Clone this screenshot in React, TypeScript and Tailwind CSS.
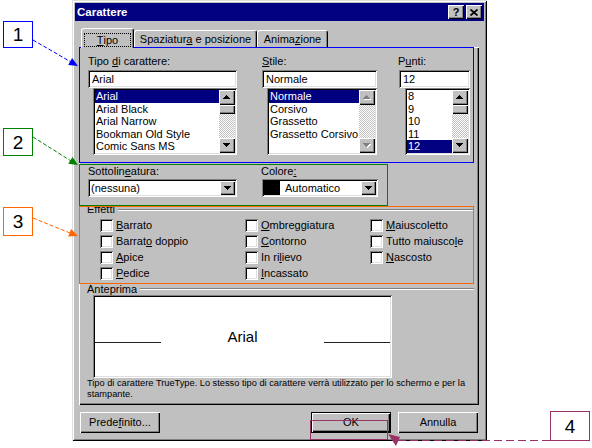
import React from "react";

const RAISED = "shadow-[inset_1px_1px_#ffffff,inset_-1px_-1px_#000000,inset_-2px_-2px_#808080]";
const SUNKEN = "shadow-[inset_1px_1px_#808080,inset_-1px_-1px_#ffffff,inset_2px_2px_#000000,inset_-2px_-2px_#dfdfdf]";
const DIALOG = "shadow-[inset_1px_1px_#dfdfdf,inset_-1px_-1px_#000000,inset_2px_2px_#ffffff,inset_-2px_-2px_#808080]";

function Tri({ dir, disabled }: { dir: "up" | "down"; disabled?: boolean }) {
  const pts = dir === "up" ? "3.5,0 7,4 0,4" : "0,0 7,0 3.5,4";
  return (
    <svg width="8" height="5" viewBox="0 0 8 5" shapeRendering="crispEdges">
      {disabled && <polygon points={pts} transform="translate(1,1)" fill="#ffffff" />}
      <polygon points={pts} fill={disabled ? "#808080" : "#000000"} />
    </svg>
  );
}

function SBtn({ dir, disabled }: { dir: "up" | "down"; disabled?: boolean }) {
  return (
    <div className={`flex h-[15px] w-[16px] items-center justify-center bg-[#c0c0c0] ${RAISED}`}>
      <Tri dir={dir} disabled={disabled} />
    </div>
  );
}

function ScrollBar({ disabled }: { disabled?: boolean }) {
  return (
    <div className="flex w-[16px] flex-col bg-[repeating-conic-gradient(#c0c0c0_0_25%,#ffffff_0_50%)] bg-[length:2px_2px]">
      <SBtn dir="up" disabled={disabled} />
      {!disabled && <div className={`h-[9px] bg-[#c0c0c0] ${RAISED}`} />}
      <div className="flex-1" />
      <SBtn dir="down" disabled={disabled} />
    </div>
  );
}

function TextBox({ children }: { children: React.ReactNode }) {
  return (
    <div className={`mt-[2px] flex h-[18px] items-center bg-white pl-[4px] ${SUNKEN}`}>{children}</div>
  );
}

function ListBox({
  items,
  selected,
  className,
  disabledScroll,
}: {
  items: string[];
  selected: number;
  className: string;
  disabledScroll?: boolean;
}) {
  return (
    <div className={`flex h-[67px] bg-white p-[2px] ${SUNKEN} ${className}`}>
      <div className="flex flex-1 flex-col overflow-hidden">
        {items.map((it, i) => (
          <div
            key={it}
            className={
              i === selected
                ? "h-[12.5px] whitespace-nowrap bg-[#000080] pl-[1px] leading-[12.5px] text-white"
                : "h-[12.5px] whitespace-nowrap pl-[1px] leading-[12.5px]"
            }
          >
            {it}
          </div>
        ))}
      </div>
      <ScrollBar disabled={disabledScroll} />
    </div>
  );
}

function Combo({ children }: { children: React.ReactNode }) {
  return (
    <div className={`mt-[1px] flex h-[18px] bg-white p-[2px] ${SUNKEN}`}>
      <div className="flex flex-1 items-center pl-[1px]">{children}</div>
      <div className={`flex h-[14px] w-[15px] items-center justify-center bg-[#c0c0c0] ${RAISED}`}>
        <Tri dir="down" />
      </div>
    </div>
  );
}

function Check({ children }: { children: React.ReactNode }) {
  return (
    <div className="flex h-[13px] items-center">
      <div className={`h-[13px] w-[13px] bg-white ${SUNKEN}`} />
      <span className="ml-[3px] whitespace-nowrap leading-[13px]">{children}</span>
    </div>
  );
}

function Button({ children, className }: { children: React.ReactNode; className: string }) {
  return (
    <div className={`flex items-center justify-center bg-[#c0c0c0] ${RAISED} ${className}`}>{children}</div>
  );
}

export default function App() {
  return (
    <div className="relative h-[448px] w-[592px] overflow-hidden bg-white font-['Liberation_Sans',Arial,sans-serif] text-[11px] leading-[13px] text-black">
      {/* Dialog */}
      <div className={`ml-[72px] flex h-[441px] w-[415px] flex-col bg-[#c0c0c0] ${DIALOG}`}>
        {/* Title bar */}
        <div className="mx-[3px] mt-[3px] flex h-[18px] items-center bg-[#000080] pl-[2px] pr-[2px]">
          <span className="flex-1 text-[11.5px] font-bold text-white">Carattere</span>
          <div className={`flex h-[14px] w-[16px] items-center justify-center bg-[#c0c0c0] text-[11px] font-bold leading-none ${RAISED}`}>
            ?
          </div>
          <div className={`ml-[2px] flex h-[14px] w-[16px] items-center justify-center bg-[#c0c0c0] ${RAISED}`}>
            <svg width="8" height="7" viewBox="0 0 8 7">
              <path d="M0.5 0.5 L7.5 6.5 M7.5 0.5 L0.5 6.5" stroke="#000000" strokeWidth="1.7" />
            </svg>
          </div>
        </div>

        {/* Tabs */}
        <div className="relative z-10 -mb-px ml-[9px] mt-[7px] flex h-[20px] items-end">
          <div className="flex h-[20px] w-[53px] justify-center rounded-t-[3px] border-l border-r border-t border-l-white border-r-black border-t-white bg-[#c0c0c0] pt-[4px] shadow-[inset_-1px_0_#808080]">
            <span className="flex h-[14px] w-[47px] justify-center border border-dotted border-black leading-[12px]">
              <u>T</u>ipo
            </span>
          </div>
          <div className="mb-px flex h-[17px] w-[123px] justify-center rounded-t-[3px] border-l border-r border-t border-l-white border-r-black border-t-white pt-[2px] shadow-[inset_-1px_0_#808080]">
            <span>
              Spaziatur<u>a</u> e posizione
            </span>
          </div>
          <div className="mb-px flex h-[17px] w-[71px] justify-center rounded-t-[3px] border-l border-r border-t border-l-white border-r-black border-t-white pt-[2px] shadow-[inset_-1px_0_#808080]">
            <span>
              Anima<u>z</u>ione
            </span>
          </div>
        </div>

        {/* Panel */}
        <div className={`ml-[7px] flex h-[358px] w-[400px] flex-col bg-[#c0c0c0] pt-[8px] ${RAISED}`}>
          {/* Font / Style / Size */}
          <div className="ml-[9px] flex">
            <div className="flex w-[149px] flex-col">
              <div className="h-[13px]">
                Tipo <u>d</u>i carattere:
              </div>
              <TextBox>Arial</TextBox>
              <ListBox
                className="ml-[5px] w-[144px]"
                items={["Arial", "Arial Black", "Arial Narrow", "Bookman Old Style", "Comic Sans MS"]}
                selected={0}
              />
            </div>
            <div className="ml-[25px] flex w-[115px] flex-col">
              <div className="h-[13px]">
                <u>S</u>tile:
              </div>
              <TextBox>Normale</TextBox>
              <ListBox
                className="ml-[5px] w-[110px]"
                items={["Normale", "Corsivo", "Grassetto", "Grassetto Corsivo"]}
                selected={0}
                disabledScroll
              />
            </div>
            <div className="ml-[22px] flex w-[71px] flex-col">
              <div className="-ml-px h-[13px]">
                P<u>u</u>nti:
              </div>
              <TextBox>12</TextBox>
              <ListBox className="ml-[6px] w-[65px]" items={["8", "9", "10", "11", "12"]} selected={4} />
            </div>
          </div>

          {/* Underline / Color */}
          <div className="ml-[9px] mt-[10px] flex">
            <div className="flex w-[149px] flex-col">
              <div className="h-[13px]">
                Sottolin<u>e</u>atura:
              </div>
              <Combo>(nessuna)</Combo>
            </div>
            <div className="ml-[25px] flex w-[116px] flex-col">
              <div className="-ml-px h-[13px]">
                Colore<u>:</u>
              </div>
              <Combo>
                <div className="-ml-px h-[14px] w-[16px] bg-black" />
                <span className="ml-[5px]">Automatico</span>
              </Combo>
            </div>
          </div>

          {/* Effetti */}
          <div className="ml-[8px] mr-[5px] mt-[6px] flex h-[13px] items-center">
            <span className="pr-[3px]">Effetti</span>
            <div className="h-[2px] flex-1 border-b border-t border-b-white border-t-[#808080]" />
          </div>
          <div className="ml-[21px] mt-[3px] flex">
            <div className="flex w-[145px] flex-col gap-[3px]">
              <Check>
                <u>B</u>arrato
              </Check>
              <Check>
                Barrat<u>o</u> doppio
              </Check>
              <Check>
                <u>A</u>pice
              </Check>
              <Check>
                <u>P</u>edice
              </Check>
            </div>
            <div className="flex w-[125px] flex-col gap-[3px]">
              <Check>
                <u>O</u>mbreggiatura
              </Check>
              <Check>
                <u>C</u>ontorno
              </Check>
              <Check>
                In ri<u>l</u>ievo
              </Check>
              <Check>
                <u>I</u>ncassato
              </Check>
            </div>
            <div className="flex flex-col gap-[3px]">
              <Check>
                <u>M</u>aiuscoletto
              </Check>
              <Check>
                Tutto maiusco<u>l</u>e
              </Check>
              <Check>
                <u>N</u>ascosto
              </Check>
            </div>
          </div>

          {/* Anteprima */}
          <div className="ml-[8px] mr-[5px] mt-[3px] flex h-[12px] items-center">
            <span className="pr-[3px] leading-[12px]">Anteprima</span>
            <div className="h-[2px] flex-1 border-b border-t border-b-white border-t-[#808080]" />
          </div>
          <div className={`ml-[14px] h-[83px] w-[299px] bg-white p-[2px] ${SUNKEN}`}>
            <div className="flex items-start pt-[32px]">
              <div className="mt-[13px] h-px w-[66px] bg-[#202020]" />
              <div className="flex-1 text-center text-[15px] leading-[15px]">Arial</div>
              <div className="mt-[13px] h-px w-[66px] bg-[#202020]" />
            </div>
          </div>
          <div className="ml-[8px] whitespace-nowrap text-[9.25px] leading-[11px]">
            Tipo di carattere TrueType. Lo stesso tipo di carattere verrà utilizzato per lo schermo e per la
            <br />
            stampante.
          </div>
        </div>

        {/* Buttons */}
        <div className="ml-[8px] mt-[7px] flex">
          <Button className="h-[21px] w-[80px]">
            Prede<u>f</u>inito...
          </Button>
          <div className="ml-[151px] flex h-[21px] w-[80px] border border-black">
            <Button className="h-full w-full">OK</Button>
          </div>
          <Button className="ml-[7px] h-[21px] w-[80px]">Annulla</Button>
        </div>
      </div>

      {/* Annotation highlight rectangles */}
      <div className="pointer-events-none absolute left-[79px] top-[47px] h-[116px] w-[395px] border border-[#0000ff]" />
      <div className="pointer-events-none absolute left-[79px] top-[164px] h-[42px] w-[309px] border border-[#008000]" />
      <div className="pointer-events-none absolute left-[79px] top-[206px] h-[78px] w-[395px] border border-[#ff6600]" />
      <div className="pointer-events-none absolute left-[310px] top-[420px] h-[20px] w-[78px] border border-[#993366]" />

      {/* Numbered callouts */}
      <div className="absolute left-[3px] top-[21px] flex h-[27px] w-[30px] items-center justify-center border border-[#0000ff] bg-white text-[19px] leading-none">
        1
      </div>
      <div className="absolute left-[3px] top-[128px] flex h-[28px] w-[30px] items-center justify-center border border-[#008000] bg-white text-[19px] leading-none">
        2
      </div>
      <div className="absolute left-[3px] top-[207px] flex h-[29px] w-[30px] items-center justify-center border border-[#ff6600] bg-white text-[19px] leading-none">
        3
      </div>
      <div className="absolute left-[550px] top-[411px] flex h-[30px] w-[40px] items-center justify-center border border-[#993366] bg-white text-[19px] leading-none">
        4
      </div>

      {/* Dashed arrows */}
      <svg className="pointer-events-none absolute left-0 top-0" width="592" height="448" viewBox="0 0 592 448">
        <line x1="33" y1="40" x2="71" y2="62" stroke="#0000ff" strokeDasharray="4 2" />
        <polygon points="78,66 68.2,65.1 72.1,58.1" fill="#0000ff" />
        <line x1="33" y1="137" x2="71" y2="161" stroke="#008000" strokeDasharray="4 2" />
        <polygon points="78,165 68.3,163.7 72.5,156.9" fill="#008000" />
        <line x1="33" y1="218" x2="70" y2="233" stroke="#ff6600" strokeDasharray="4 2" />
        <polygon points="78,236 68.2,236.4 71.1,229" fill="#ff6600" />
        <line x1="550" y1="440.5" x2="396" y2="440.5" stroke="#993366" strokeDasharray="8 4" />
        <polygon points="388,434 400,437 396,446" fill="#993366" />
      </svg>
    </div>
  );
}
